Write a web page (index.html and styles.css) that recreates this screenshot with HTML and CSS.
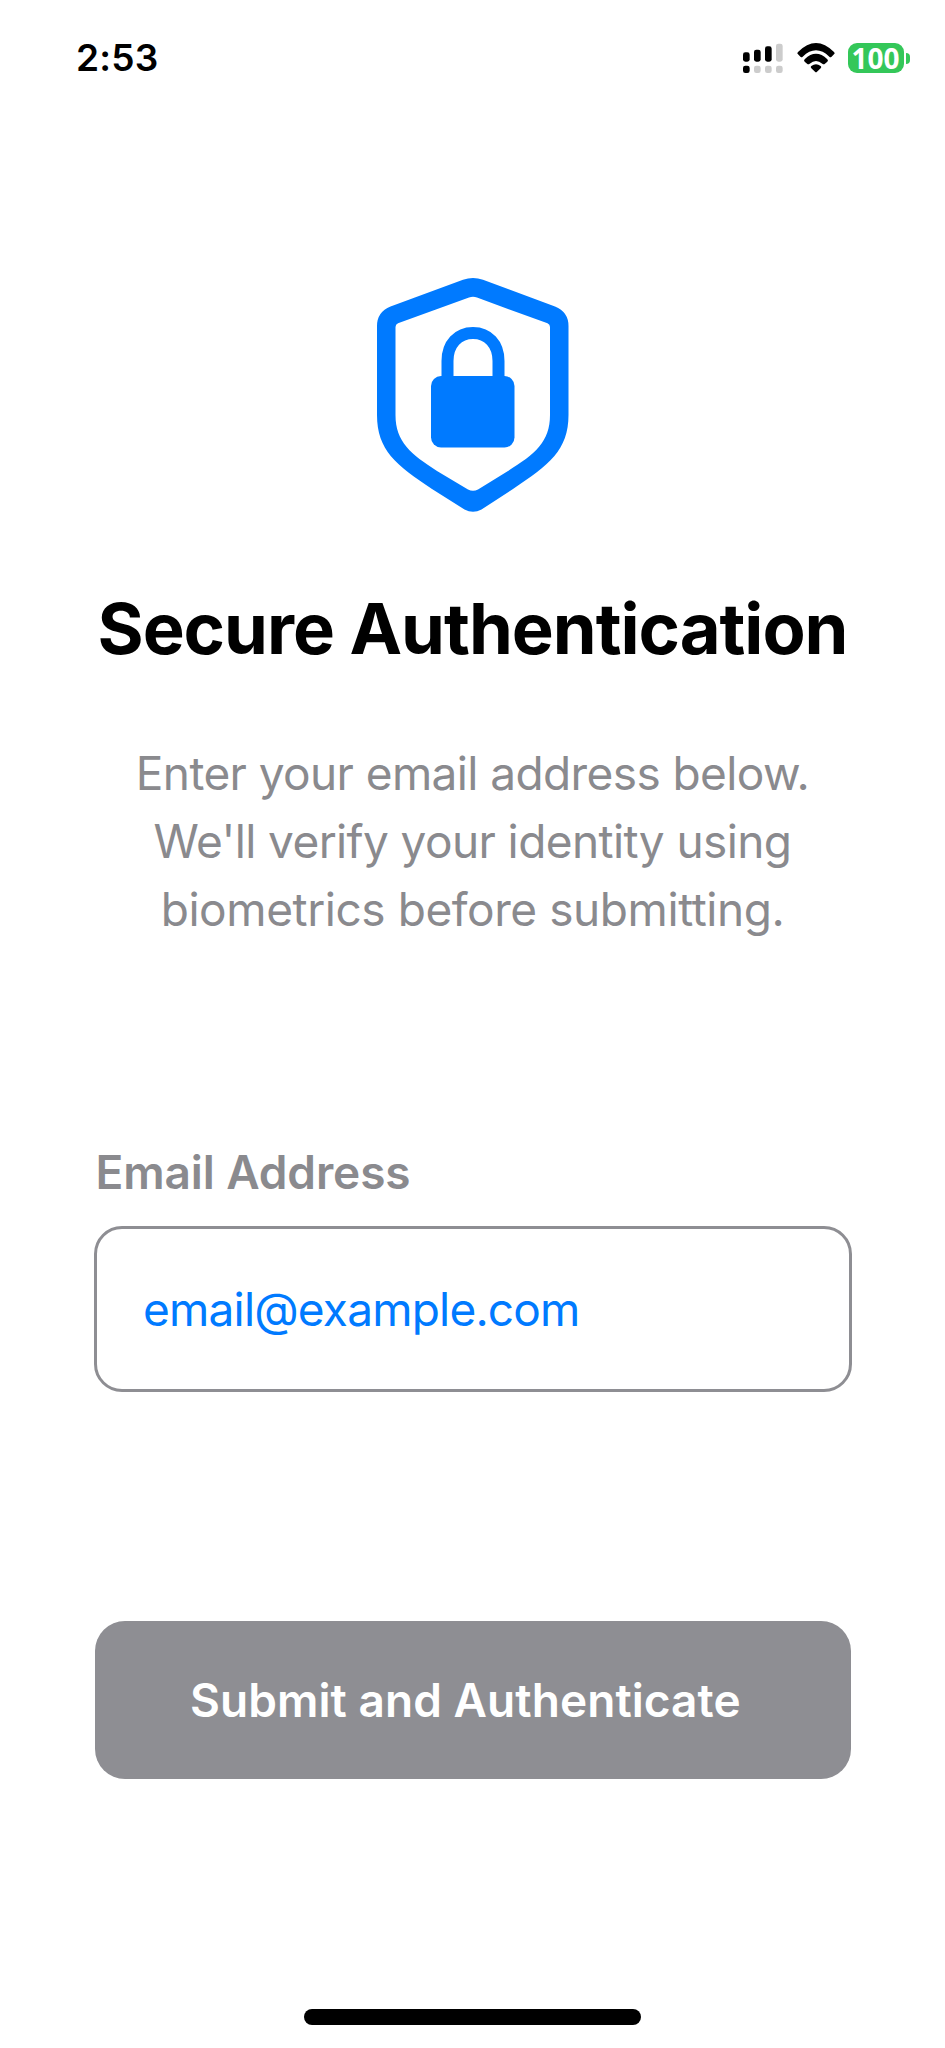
FILE: index.html
```html
<!DOCTYPE html>
<html lang="en">
<head>
<meta charset="utf-8">
<title>Secure Authentication</title>
<link rel="stylesheet" href="styles.css">
</head>
<body>
<div class="screen">
  <header class="status">
    <span class="time">2:53</span>
    <div class="indicators">
      <svg class="cell" viewBox="0 0 120 90">
        <g fill="#ccc"><rect x="99" y="2" width="20" height="54" rx="7"/><rect x="33" y="68" width="20" height="22" rx="7"/><rect x="66" y="68" width="20" height="22" rx="7"/><rect x="99" y="68" width="20" height="22" rx="7"/></g>
        <rect x="0" y="28" width="20" height="28" rx="7"/><rect x="33" y="20" width="20" height="36" rx="7"/><rect x="66" y="10" width="20" height="46" rx="7"/><rect x="0" y="68" width="20" height="22" rx="7"/>
      </svg>
      <svg class="wifi" viewBox="0 0 114 88">
        <path d="M3 27Q-1 31 3 34L11 42Q14 44 17 41Q57 3 97 41Q100 44 103 42L111 34Q115 31 111 27Q57-27 3 27Z"/>
        <path d="M23 49Q19 53 23 56L31 63Q34 65 38 62Q57 46 76 62Q80 65 83 63L91 56Q95 53 91 49Q57 16 23 49Z"/>
        <path d="M43 69Q39 72 43 76L54 86Q57 89 60 86L71 76Q75 72 71 69Q57 59 43 69Z"/>
      </svg>
      <div class="battery"><span class="level">100</span><span class="nub"></span></div>
    </div>
  </header>

  <main class="content">
    <svg class="shield" viewBox="0 0 215 255">
      <path fill="#007aff" fill-rule="evenodd" d="M98 14.8Q108 11.2 118 14.8L190 41.5Q203.5 47 203.5 61V150C203.5 185 184 200 148 224L116.500 244.500Q108 249 99.500 244.500L67 224C31 200 12 185 12 150V61Q12 47 25.500 41.500ZM104 32.600Q108 31 112 32.600L182.500 58.300Q185 59.500 185 62V150C185 177 170 189 143 206L113 224.500Q108 227 103 224.500L72 206C46 189 30.500 177 30.500 150V62Q30.500 59.500 33 58.300Z"/>
      <path fill="none" stroke="#007aff" stroke-width="12" d="M82.500 114V96C82.500 79 93 68 108 68S133.500 79 133.500 96V114"/>
      <rect x="66" y="111" width="83.500" height="71.500" rx="10" fill="#007aff"/>
    </svg>
    <h1 class="title">Secure Authentication</h1>
    <p class="intro"><span class="line">Enter your email address below.</span><span class="line">We'll verify your identity using</span><span class="line line-last">biometrics before submitting.</span></p>
    <form class="form">
      <label class="label" for="email">Email Address</label>
      <div class="field" id="email"><span class="placeholder">email@example.com</span></div>
      <button class="submit" type="button">Submit and Authenticate</button>
    </form>
  </main>
  <div class="home"></div>
</div>
</body>
</html>
```
FILE: styles.css
```css
* { box-sizing: border-box; }
body { margin: 0; background: #fff; font-family: Inter, "Liberation Sans", sans-serif; }
.screen { width: 945px; height: 2048px; display: flex; flex-direction: column; align-items: center; padding-bottom: 23.5px; overflow: hidden; }
.status { width: 100%; height: 116px; padding: 0 35.500px 0 76px; display: flex; justify-content: space-between; align-items: center; }
.time { font-size: 37px; font-weight: 600; line-height: 44px; letter-spacing: 0.2px; }
.indicators { display: flex; align-items: center; }
.cell { width: 40px; height: 30px; margin-right: 14px; }
.wifi { width: 38px; height: 29.300px; margin-right: 13px; }
.battery { display: flex; align-items: center; gap: 2.500px; }
.level { width: 56px; height: 30.500px; border-radius: 9px; background: #34c759; color: #fff; font-family: "Open Sans", sans-serif; font-size: 28px; line-height: 30px; font-weight: 700; text-align: center; }
.nub { width: 3.500px; height: 11px; border-radius: 0 4px 4px 0; background: #34c759; }
.content { width: 756px; flex: 1; display: flex; flex-direction: column; align-items: center; padding-top: 149px; }
.shield { width: 215px; height: 255px; }
.title { margin: 66px 0 0; font-size: 70.500px; line-height: 86px; font-weight: 700; letter-spacing: -1.030px; white-space: nowrap; }
.intro { margin: 67px 0 0; font-size: 46px; line-height: 68px; letter-spacing: -0.600px; color: #8a8a8e; text-align: center; white-space: nowrap; }
.line { display: block; }
.line-last { letter-spacing: -0.430px; }
.form { width: 100%; margin-top: 201px; display: flex; flex-direction: column; }
.label { font-size: 46px; line-height: 56px; letter-spacing: -0.120px; font-weight: 600; color: #8a8a8e; margin-left: 1px; white-space: nowrap; }
.field { width: 758px; height: 166px; margin: 26px 0 0 -1px; border: 3px solid #8e8e93; border-radius: 28px; padding-left: 46.500px; display: flex; align-items: center; color: #007aff; font-size: 46px; letter-spacing: -0.800px; }
.submit { width: 756px; height: 158px; margin-top: 229px; border: 0; border-radius: 30px; background: #8e8e93; color: #fff; font: 600 46px/56px Inter, sans-serif; letter-spacing: 0.060px; padding: 0 0 0 95.500px; text-align: left; }
.home { width: 337px; height: 15.500px; border-radius: 8px; background: #000; }
```
